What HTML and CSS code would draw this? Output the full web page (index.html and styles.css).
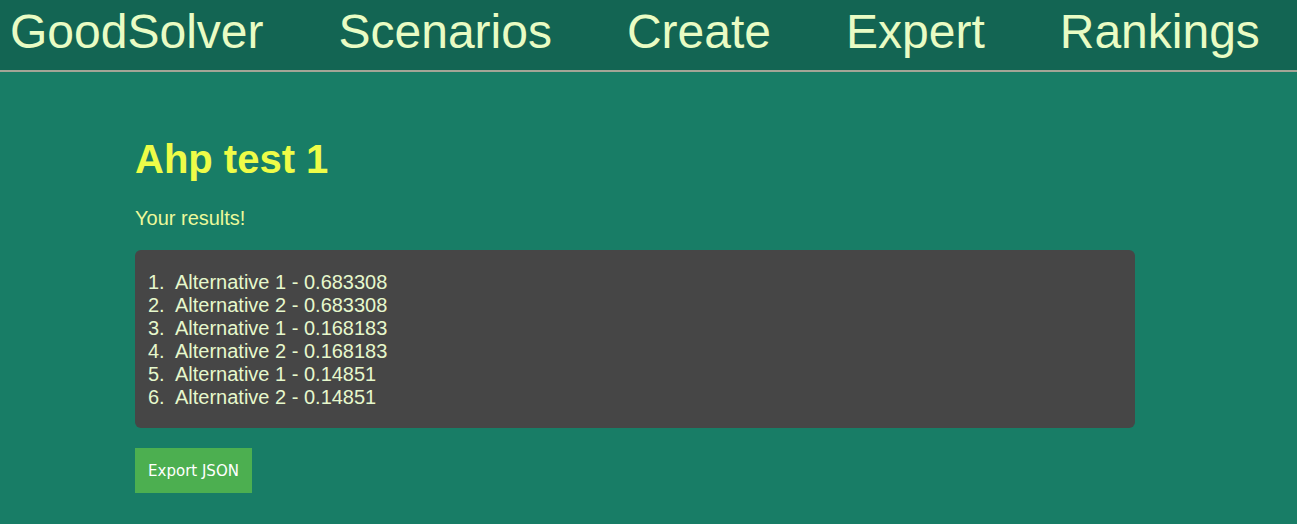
FILE: index.html
```html
<!DOCTYPE html>
<html lang="en">
<head>
<meta charset="utf-8">
<title>GoodSolver - Ahp test 1</title>
<link rel="stylesheet" href="styles.css">
</head>
<body>
<header class="topbar">
  <nav class="nav">
    <a class="nav-link" href="#">GoodSolver</a>
    <a class="nav-link" href="#">Scenarios</a>
    <a class="nav-link" href="#">Create</a>
    <a class="nav-link" href="#">Expert</a>
    <a class="nav-link" href="#">Rankings</a>
  </nav>
</header>
<main class="content">
  <h1 class="title">Ahp test 1</h1>
  <p class="subtitle">Your results!</p>
  <div class="results">
    <ol class="result-list">
      <li class="result-item"><span class="num">1.</span><span>Alternative 1 - 0.683308</span></li>
      <li class="result-item"><span class="num">2.</span><span>Alternative 2 - 0.683308</span></li>
      <li class="result-item"><span class="num">3.</span><span>Alternative 1 - 0.168183</span></li>
      <li class="result-item"><span class="num">4.</span><span>Alternative 2 - 0.168183</span></li>
      <li class="result-item"><span class="num">5.</span><span>Alternative 1 - 0.14851</span></li>
      <li class="result-item"><span class="num">6.</span><span>Alternative 2 - 0.14851</span></li>
    </ol>
  </div>
  <button class="export-btn" type="button">Export JSON</button>
</main>
</body>
</html>
```

FILE: styles.css
```css
html, body {
  margin: 0;
  padding: 0;
}
body {
  background: #187d66;
  font-family: "Liberation Sans", Arial, sans-serif;
  min-height: 524px;
}
.topbar {
  background: #136553;
  height: 70px;
  border-bottom: 2px solid #a3a596;
  box-sizing: content-box;
}
.nav {
  display: flex;
  gap: 75px;
  padding: 4px 0 0 10px;
}
.nav-link {
  font-size: 48px;
  line-height: 55px;
  color: #e9fcc4;
  text-decoration: none;
  white-space: nowrap;
}
.content {
  padding: 64px 0 0 135px;
}
.title {
  margin: 0;
  font-size: 40px;
  line-height: 46px;
  font-weight: bold;
  color: #eefc48;
}
.subtitle {
  margin: 25px 0 0;
  font-size: 20px;
  line-height: 23px;
  color: #ecf99a;
}
.results {
  margin-top: 20px;
  width: 1000px;
  box-sizing: border-box;
  background: #464646;
  border-radius: 6px;
  padding: 21px 13px 19px;
}
.result-list {
  list-style: none;
  margin: 0;
  padding: 0;
}
.result-item {
  display: flex;
  font-size: 20px;
  line-height: 23px;
  color: #e6f8cc;
}
.num {
  width: 27px;
  flex: none;
}
.export-btn {
  display: block;
  margin-top: 20px;
  width: 117px;
  height: 45px;
  padding: 0;
  border: none;
  border-radius: 0;
  background: #4caf50;
  color: #ffffff;
  font-family: "DejaVu Sans", Tahoma, sans-serif;
  font-size: 15px;
  cursor: pointer;
}
```
